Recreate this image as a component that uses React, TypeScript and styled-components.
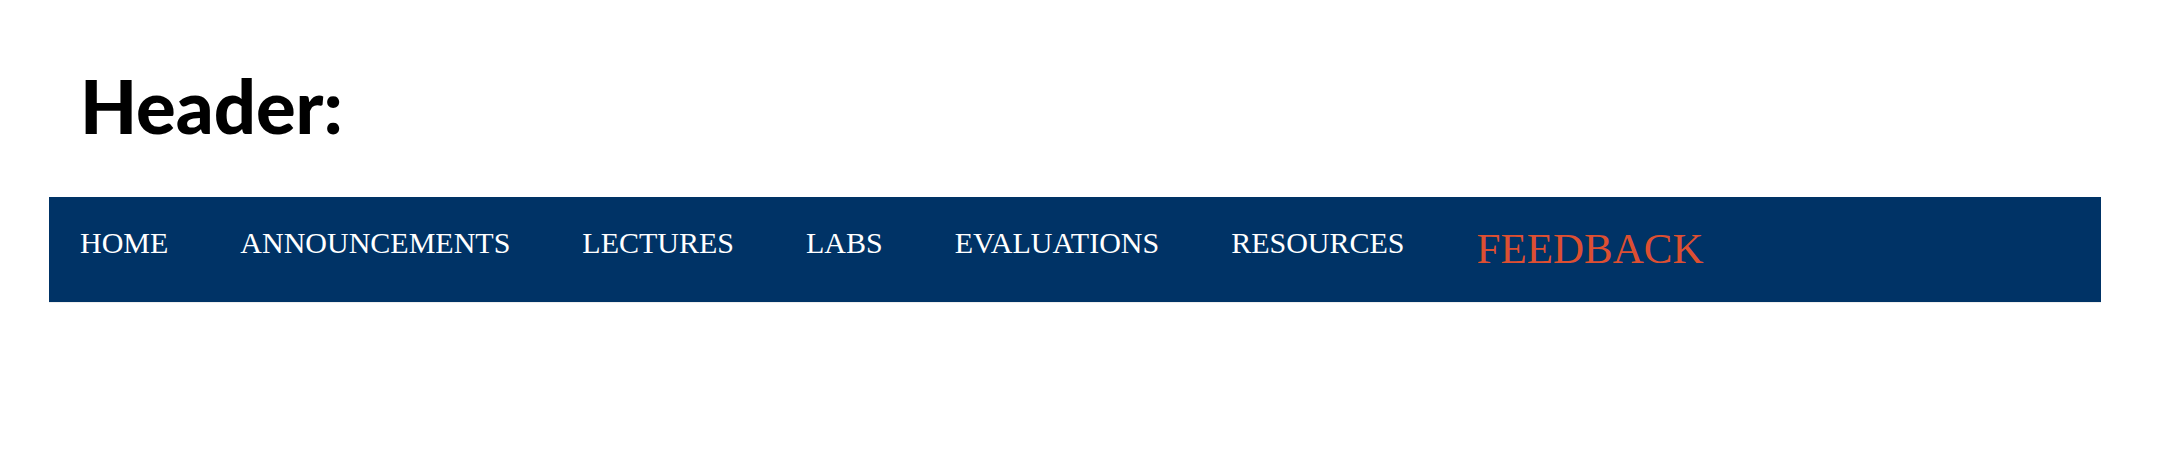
import React from "react";
import styled, { createGlobalStyle } from "styled-components";

const GlobalStyle = createGlobalStyle`
  body { margin: 0; background: #ffffff; }
`;

const Page = styled.main`
  padding: 58px 59px 0 49px;
`;

const Title = styled.h1`
  margin: 0;
  padding-left: 31px;
  font: 900 74px/96px Lato, sans-serif;
  color: #000000;
`;

const NavBar = styled.nav`
  margin-top: 43px;
  padding: 30px 31px 31px;
  background: #003366;
  border-bottom: 1px solid #eeeeee;
`;

const NavList = styled.ul`
  display: flex;
  align-items: flex-start;
  gap: 72px;
  margin: 0;
  padding: 0;
  list-style: none;
`;

const NavLink = styled.a<{ $highlight?: boolean }>`
  display: block;
  font-family: "Liberation Serif", "Times New Roman", serif;
  font-size: ${({ $highlight }) => ($highlight ? 43 : 30)}px;
  line-height: ${({ $highlight }) => ($highlight ? 44 : 32)}px;
  color: ${({ $highlight }) => ($highlight ? "#dd4f32" : "#ffffff")};
  text-decoration: none;
  white-space: nowrap;
`;

const links = [
  { label: "HOME", href: "#home" },
  { label: "ANNOUNCEMENTS", href: "#announcements" },
  { label: "LECTURES", href: "#lectures" },
  { label: "LABS", href: "#labs" },
  { label: "EVALUATIONS", href: "#evaluations" },
  { label: "RESOURCES", href: "#resources" },
  { label: "FEEDBACK", href: "#feedback", highlight: true },
];

export default function App() {
  return (
    <>
      <GlobalStyle />
      <Page>
        <Title>Header:</Title>
        <NavBar aria-label="Main">
          <NavList>
            {links.map(({ label, href, highlight }) => (
              <li key={label}>
                <NavLink href={href} $highlight={highlight}>{label}</NavLink>
              </li>
            ))}
          </NavList>
        </NavBar>
      </Page>
    </>
  );
}
